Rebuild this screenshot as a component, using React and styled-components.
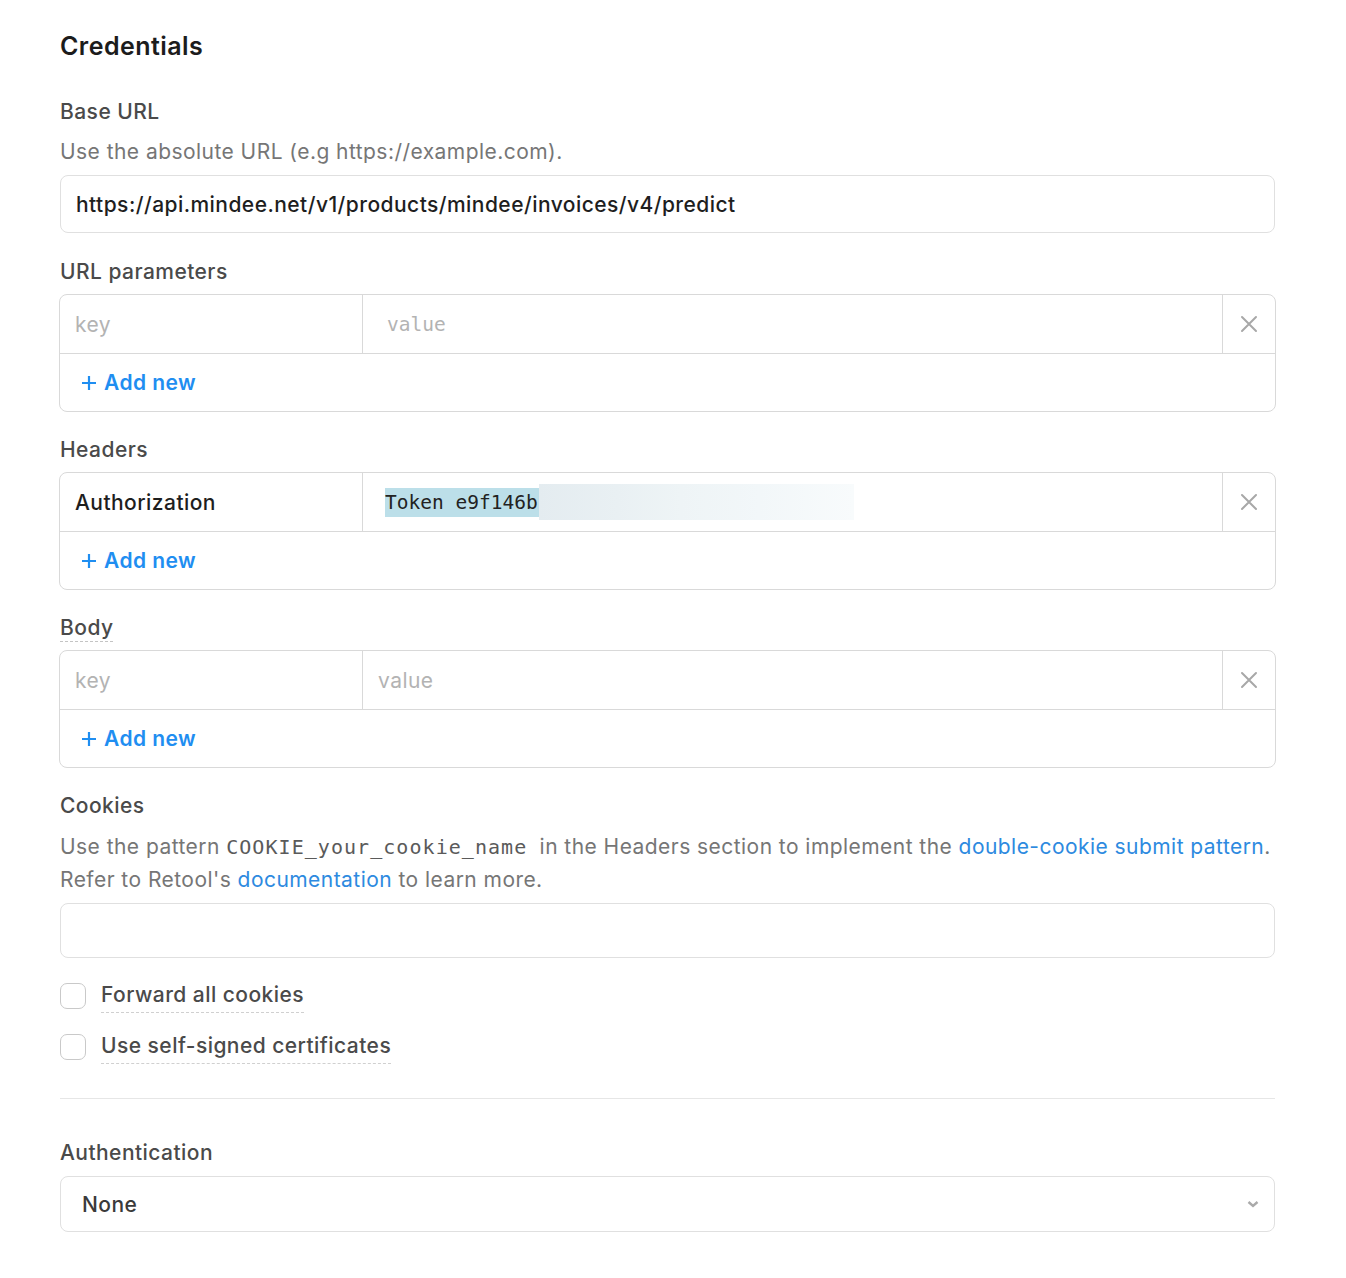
import React from "react";
import styled, { createGlobalStyle } from "styled-components";

const Global = createGlobalStyle`
  html, body { margin: 0; padding: 0; background: #fff; }
  body { font-family: Inter, "Noto Sans", sans-serif; letter-spacing: 0.45px; -webkit-font-smoothing: antialiased; }
`;

const Page = styled.div`
  padding: 30px 71px 40px 60px;
  display: flex;
  flex-direction: column;
`;

const Title = styled.h2`
  margin: 0;
  font-size: 25px;
  line-height: 32px;
  font-weight: 600;
  color: #1c1c1c;
`;

const Label = styled.div`
  font-size: 21px;
  line-height: 28px;
  font-weight: 500;
  color: #4a4a4a;
  margin-top: ${(p) => p.$mt ?? 24}px;
  margin-bottom: ${(p) => p.$mb ?? 8}px;
  align-self: flex-start;
  ${(p) =>
    p.$dashed &&
    `border-bottom: 1px dashed #c4c4c4; line-height: 27px;`}
`;

const Desc = styled.div`
  font-size: 21px;
  line-height: ${(p) => p.$lh || 28}px;
  color: #767676;
  margin-top: ${(p) => p.$mt ?? 2}px;
  margin-bottom: ${(p) => p.$mb ?? 9}px;
`;

const Code = styled.code`
  font-family: "DejaVu Sans Mono", "Liberation Mono", monospace;
  font-size: 20px;
  line-height: 1;
  letter-spacing: 1.05px;
  color: #5a5a5a;
  margin-right: 6px;
`;

const Link = styled.a`
  color: #2d8ae0;
  text-decoration: none;
`;

const Input = styled.div`
  box-sizing: border-box;
  height: ${(p) => p.$h || 58}px;
  border: 1px solid #e0e0e0;
  border-radius: 8px;
  display: flex;
  align-items: center;
  padding: 0 15px;
  font-size: 21px;
  font-weight: 500;
  color: #1e1e1e;
`;

const Table = styled.div`
  box-sizing: border-box;
  width: 1217px;
  margin-left: -1px;
  border: 1px solid #d9d9d9;
  border-radius: 8px;
  display: flex;
  flex-direction: column;
`;

const Row = styled.div`
  display: grid;
  grid-template-columns: 303px 1fr 52px;
  height: 58px;
  border-bottom: 1px solid #d9d9d9;
`;

const Cell = styled.div`
  display: flex;
  align-items: center;
  padding-left: ${(p) => p.$pl || 15}px;
  font-size: 21px;
  color: ${(p) => (p.$ph ? "#b3b3b3" : "#1e1e1e")};
  font-weight: ${(p) => (p.$ph ? 400 : 500)};
  border-right: 1px solid #d9d9d9;
  overflow: hidden;
`;

const MonoCell = styled(Cell)`
  font-family: "DejaVu Sans Mono", "Liberation Mono", monospace;
  font-weight: 400;
  font-size: 19.5px;
  letter-spacing: 0;
`;

const CloseCell = styled.div`
  display: flex;
  align-items: center;
  justify-content: center;
`;

const Highlight = styled.span`
  background: #bcdfe9;
  color: #222;
  line-height: 29px;
  padding-right: 1px;
`;

const Blur = styled.span`
  display: inline-block;
  width: 315px;
  height: 36px;
  background: linear-gradient(
    90deg,
    #e4ecf0 0%,
    #e9f0f3 25%,
    #eef4f6 45%,
    #f2f7f9 70%,
    #f8fbfc 100%
  );
`;

const AddRow = styled.div`
  height: 57px;
  display: flex;
  align-items: center;
  padding-left: 21px;
  font-size: 21px;
  font-weight: 600;
  color: #1f8ef1;
  gap: 7px;
`;

const CheckRow = styled.label`
  display: flex;
  align-items: flex-start;
  gap: 15px;
  margin-top: ${(p) => p.$mt}px;
`;

const Box = styled.span`
  box-sizing: border-box;
  width: 26px;
  height: 26px;
  border: 1px solid #c9c9c9;
  border-radius: 7px;
  margin-top: 3px;
  flex: none;
`;

const CheckLabel = styled.span`
  font-size: 21px;
  line-height: 30px;
  font-weight: 500;
  color: #4a4a4a;
  border-bottom: 1px dashed #d0d0d0;
  padding-bottom: 2px;
`;

const Divider = styled.hr`
  border: none;
  border-top: 1px solid #e6e6e6;
  margin: 34px 0 0;
`;

const Select = styled(Input)`
  justify-content: space-between;
  padding: 0 15px 0 21px;
  font-weight: 500;
  color: #3a3a3a;
`;

const XIcon = () => (
  <svg width="18" height="18" viewBox="0 0 18 18">
    <path d="M2 2 L16 16 M16 2 L2 16" stroke="#a8a8a8" strokeWidth="2" strokeLinecap="round" />
  </svg>
);

const PlusIcon = () => (
  <svg width="16" height="16" viewBox="0 0 16 16">
    <path d="M8 1 V15 M1 8 H15" stroke="#1f8ef1" strokeWidth="2.2" />
  </svg>
);

const Chevron = () => (
  <svg width="12" height="8" viewBox="0 0 12 8">
    <path d="M1.5 2 L6 6 L10.5 2" stroke="#aaaaaa" strokeWidth="2.4" fill="none" />
  </svg>
);

const KVTable = ({ keyNode, valueNode }) => (
  <Table>
    <Row>
      {keyNode}
      {valueNode}
      <CloseCell>
        <XIcon />
      </CloseCell>
    </Row>
    <AddRow>
      <PlusIcon />
      Add new
    </AddRow>
  </Table>
);

export default function App() {
  return (
    <>
      <Global />
      <Page>
        <Title>Credentials</Title>
        <Label $mt={36} $mb={10}>Base URL</Label>
        <Desc>Use the absolute URL (e.g https://example.com).</Desc>
        <Input>https://api.mindee.net/v1/products/mindee/invoices/v4/predict</Input>

        <Label $mt={25}>URL parameters</Label>
        <KVTable
          keyNode={<Cell $ph>key</Cell>}
          valueNode={
            <MonoCell $ph $pl={24}>
              value
            </MonoCell>
          }
        />

        <Label>Headers</Label>
        <KVTable
          keyNode={<Cell>Authorization</Cell>}
          valueNode={
            <MonoCell $pl={22}>
              <Highlight>Token e9f146b</Highlight>
              <Blur />
            </MonoCell>
          }
        />

        <Label $dashed>Body</Label>
        <KVTable
          keyNode={<Cell $ph>key</Cell>}
          valueNode={<Cell $ph>value</Cell>}
        />

        <Label>Cookies</Label>
        <Desc $lh={33} $mt={2} $mb={7}>
          Use the pattern <Code>COOKIE_your_cookie_name</Code> in the Headers section to implement the{" "}
          <Link>double-cookie submit pattern</Link>.
          <br />
          Refer to Retool's <Link>documentation</Link> to learn more.
        </Desc>
        <Input $h={55} />

        <CheckRow $mt={22}>
          <Box />
          <CheckLabel>Forward all cookies</CheckLabel>
        </CheckRow>
        <CheckRow $mt={18}>
          <Box />
          <CheckLabel>Use self-signed certificates</CheckLabel>
        </CheckRow>

        <Divider />

        <Label $mt={40} $mb={9}>Authentication</Label>
        <Select $h={56}>
          None
          <Chevron />
        </Select>
      </Page>
    </>
  );
}
